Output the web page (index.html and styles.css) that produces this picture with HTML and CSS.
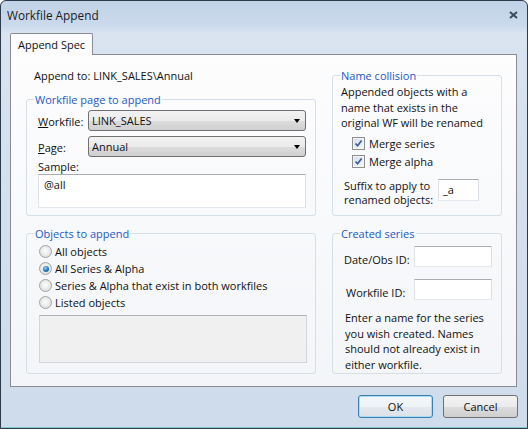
FILE: index.html
```html
<!DOCTYPE html>
<html>
<head>
<meta charset="utf-8">
<title>Workfile Append</title>
<link rel="stylesheet" href="styles.css">
</head>
<body>
<div class="window">
  <div class="titlebar">
    <span class="title">Workfile Append</span>
    <svg class="close" width="9" height="8" viewBox="0 0 9 8"><path d="M1 1 L8 7 M8 1 L1 7" stroke="#3a4a5e" stroke-width="2" fill="none"/></svg>
  </div>
  <div class="client">
    <div class="tabs"><div class="tab">Append Spec</div></div>
    <div class="panel">
      <div class="left-top">
        <div class="append-to">Append to: LINK_SALES\Annual</div>
        <fieldset class="group g-page">
          <legend>Workfile page to append</legend>
          <div class="gbody">
            <div class="form-row">
              <span class="flabel"><u>W</u>orkfile:</span>
              <div class="combo"><span>LINK_SALES</span><i class="arrow"></i></div>
            </div>
            <div class="form-row">
              <span class="flabel"><u>P</u>age:</span>
              <div class="combo"><span>Annual</span><i class="arrow"></i></div>
            </div>
            <div class="sample-label">Sample:</div>
            <div class="textbox sample">@all</div>
          </div>
        </fieldset>
      </div>

      <fieldset class="group g-collision">
        <legend>Name collision</legend>
        <div class="gbody">
          <p class="note">Appended objects with a name that exists in the original WF will be renamed</p>
          <div class="check-row"><span class="cb"><svg width="13" height="13" viewBox="0 0 13 13"><path d="M3.5 6.5 L5.6 8.8 L9.6 3.6" fill="none" stroke="#3a5b9c" stroke-width="1.7"/></svg></span><span>Merge series</span></div>
          <div class="check-row"><span class="cb"><svg width="13" height="13" viewBox="0 0 13 13"><path d="M3.5 6.5 L5.6 8.8 L9.6 3.6" fill="none" stroke="#3a5b9c" stroke-width="1.7"/></svg></span><span>Merge alpha</span></div>
          <div class="suffix-row">
            <span class="suffix-label">Suffix to apply to renamed objects:</span>
            <div class="textbox suffix">_a</div>
          </div>
        </div>
      </fieldset>

      <fieldset class="group g-objects">
        <legend>Objects to append</legend>
        <div class="gbody">
          <div class="radio-row"><span class="rd"></span><span>All objects</span></div>
          <div class="radio-row"><span class="rd checked"></span><span>All Series &amp; Alpha</span></div>
          <div class="radio-row"><span class="rd"></span><span>Series &amp; Alpha that exist in both workfiles</span></div>
          <div class="radio-row"><span class="rd"></span><span>Listed objects</span></div>
          <div class="listed"></div>
        </div>
      </fieldset>

      <fieldset class="group g-created">
        <legend>Created series</legend>
        <div class="gbody">
          <div class="id-row first"><span class="id-label">Date/Obs ID:</span><div class="textbox idbox"></div></div>
          <div class="id-row second"><span class="id-label">Workfile ID:</span><div class="textbox idbox"></div></div>
          <p class="note created-note">Enter a name for the series you wish created. Names should not already exist in either workfile.</p>
        </div>
      </fieldset>
    </div>
    <div class="buttons">
      <button class="btn default">OK</button>
      <button class="btn">Cancel</button>
    </div>
  </div>
</div>
</body>
</html>
```

FILE: styles.css
```css
* { box-sizing: border-box; }
html, body { margin: 0; padding: 0; }
body {
  width: 528px;
  height: 429px;
  overflow: hidden;
  font-family: "Open Sans", "Noto Sans", sans-serif;
  font-size: 11px;
  color: #111;
  background: #fff;
}
.window {
  width: 528px;
  height: 429px;
  border: 1px solid #2e3b4b;
  border-radius: 6px 6px 0 0;
  background: linear-gradient(#c2d3e8 0px, #cad9eb 24px, #dae4f1 33px, #d6e1ef 120px, #cfdcec 100%);
  box-shadow: inset 0 -1px 0 #7fc9d3;
  display: flex;
  flex-direction: column;
}
.titlebar {
  height: 32px;
  flex: none;
  display: flex;
  justify-content: space-between;
  align-items: flex-start;
  padding: 6px 9px 0 6px;
}
.title { font-size: 11.8px; line-height: 16px; color: #1b1b1b; }
.close { margin-top: 4px; }
.client {
  flex: 1;
  display: flex;
  flex-direction: column;
  padding: 0 10px 0 9px;
}
.tabs { display: flex; height: 21px; flex: none; }
.tab {
  position: relative;
  z-index: 1;
  width: 83px;
  height: 22px;
  border: 1px solid #898c95;
  border-bottom: none;
  border-radius: 2px 2px 0 0;
  background: #fcfcfd;
  padding: 0 0 0 7px;
  line-height: 21px;
  white-space: nowrap;
}
.panel {
  flex: none;
  height: 333px;
  border: 1px solid #898c95;
  background: linear-gradient(#fdfdfe, #f3f5f8);
  padding: 13px 0 0 15px;
  display: grid;
  grid-template-columns: 290px 170px;
  grid-template-rows: 148px 148px;
  column-gap: 16px;
  row-gap: 10px;
}
.left-top { display: flex; flex-direction: column; }
.append-to { line-height: 15px; padding-left: 8px; height: 15px; margin-bottom: 9px; }

fieldset.group {
  margin: 0;
  padding: 0;
  min-width: 0;
  border: 1px solid #d5dfe5;
  border-radius: 3px;
  height: 148px;
}
.g-page { height: 124px !important; }
legend {
  color: #2359c4;
  line-height: 15px;
  padding: 0 1px;
  margin-left: 7px;
}
.gbody { display: flex; flex-direction: column; }

/* workfile page */
.g-page .gbody { padding: 3px 7px 0 11px; }
.form-row { display: flex; align-items: center; height: 21px; margin-bottom: 5px; }
.flabel { width: 50px; padding-top: 2px; }
.combo {
  width: 218px;
  height: 21px;
  border: 1px solid #707070;
  border-radius: 3px;
  background: linear-gradient(#f2f2f2 0%, #ebebeb 50%, #dddddd 51%, #cfcfcf 100%);
  display: flex;
  align-items: center;
  justify-content: space-between;
  padding: 0 5px 0 3px;
  line-height: 15px;
}
.arrow {
  width: 0; height: 0;
  border-left: 3.5px solid transparent;
  border-right: 3.5px solid transparent;
  border-top: 4px solid #000;
}
.sample-label { line-height: 14px; margin-top: -2px; }
.textbox {
  background: #fff;
  border: 1px solid #e3e9ef;
  border-top-color: #abadb3;
  border-left-color: #e2e3ea;
  border-right-color: #dbdfe6;
  line-height: 15px;
}
.sample { width: 268px; height: 34px; padding: 2px 5px; }

/* objects */
.g-objects .gbody { padding: 2px 7px 0 12px; }
.radio-row { display: flex; align-items: center; height: 17px; gap: 3px; line-height: 15px; }
.rd {
  width: 13px; height: 13px; border-radius: 50%;
  border: 1px solid #a3a3a3;
  background: radial-gradient(circle at 50% 45%, #fdfdfd 0, #ececec 45%, #d6d6d6 100%);
  display: flex; align-items: center; justify-content: center;
}
.rd.checked::after {
  content: "";
  width: 6px; height: 6px; border-radius: 50%;
  background: radial-gradient(circle at 40% 35%, #9adaf9 0, #2f7fc2 45%, #123f72 100%);
}
.listed {
  margin-top: 4px;
  width: 268px; height: 48px;
  background: #f0f0f0;
  border: 1px solid #d2d5d9;
  border-top-color: #adb0b5;
}

/* collision */
.g-collision .gbody { padding: 1px 6px 0 8px; }
.note { margin: 0; line-height: 15.5px; }
.check-row { display: flex; align-items: center; height: 18px; gap: 4px; padding-left: 11px; line-height: 15px; }
.check-row:first-of-type { margin-top: 4px; }
.cb {
  width: 13px; height: 13px; flex: none;
  border: 1px solid #8e8f8f;
  background: linear-gradient(135deg, #d6dee8, #f8f9fa);
  box-shadow: inset 0 0 0 1px #f4f4f4;
  display: flex;
}
.cb svg { margin: -1px; }
.suffix-row { display: flex; align-items: flex-start; margin-top: 8px; padding-left: 3px; }
.suffix-label { width: 94px; line-height: 14px; }
.suffix { width: 41px; height: 22px; padding: 2px 4px; margin-top: 0; }

/* created */
.g-created .gbody { padding: 0 8px 0 11px; }
.id-row { display: flex; align-items: flex-end; }
.id-row.first { margin-top: 5px; }
.id-row.second { margin-top: 12px; }
.id-label { width: 70px; line-height: 15px; }
.second .id-label { padding-left: 2px; padding-bottom: 0; }
.idbox { width: 78px; height: 21px; }
.created-note { margin-top: 10px; padding-left: 1px; }

/* buttons */
.buttons {
  display: flex;
  justify-content: flex-end;
  gap: 10px;
  margin-top: 8px;
  margin-right: -1px;
}
.btn {
  width: 75px;
  height: 23px;
  font-family: inherit;
  font-size: 11px;
  color: #111;
  border: 1px solid #707070;
  border-radius: 3px;
  background: linear-gradient(#f2f2f2 0%, #ebebeb 50%, #dddddd 51%, #cfcfcf 100%);
  padding: 0;
  line-height: 15px;
}
.btn.default {
  border-color: #3c7fb1;
  box-shadow: inset 0 0 0 1px #a7dcf4;
  background: linear-gradient(#f4f8fa 0%, #eef3f6 50%, #e3e9ee 51%, #dbe2e8 100%);
}
```
